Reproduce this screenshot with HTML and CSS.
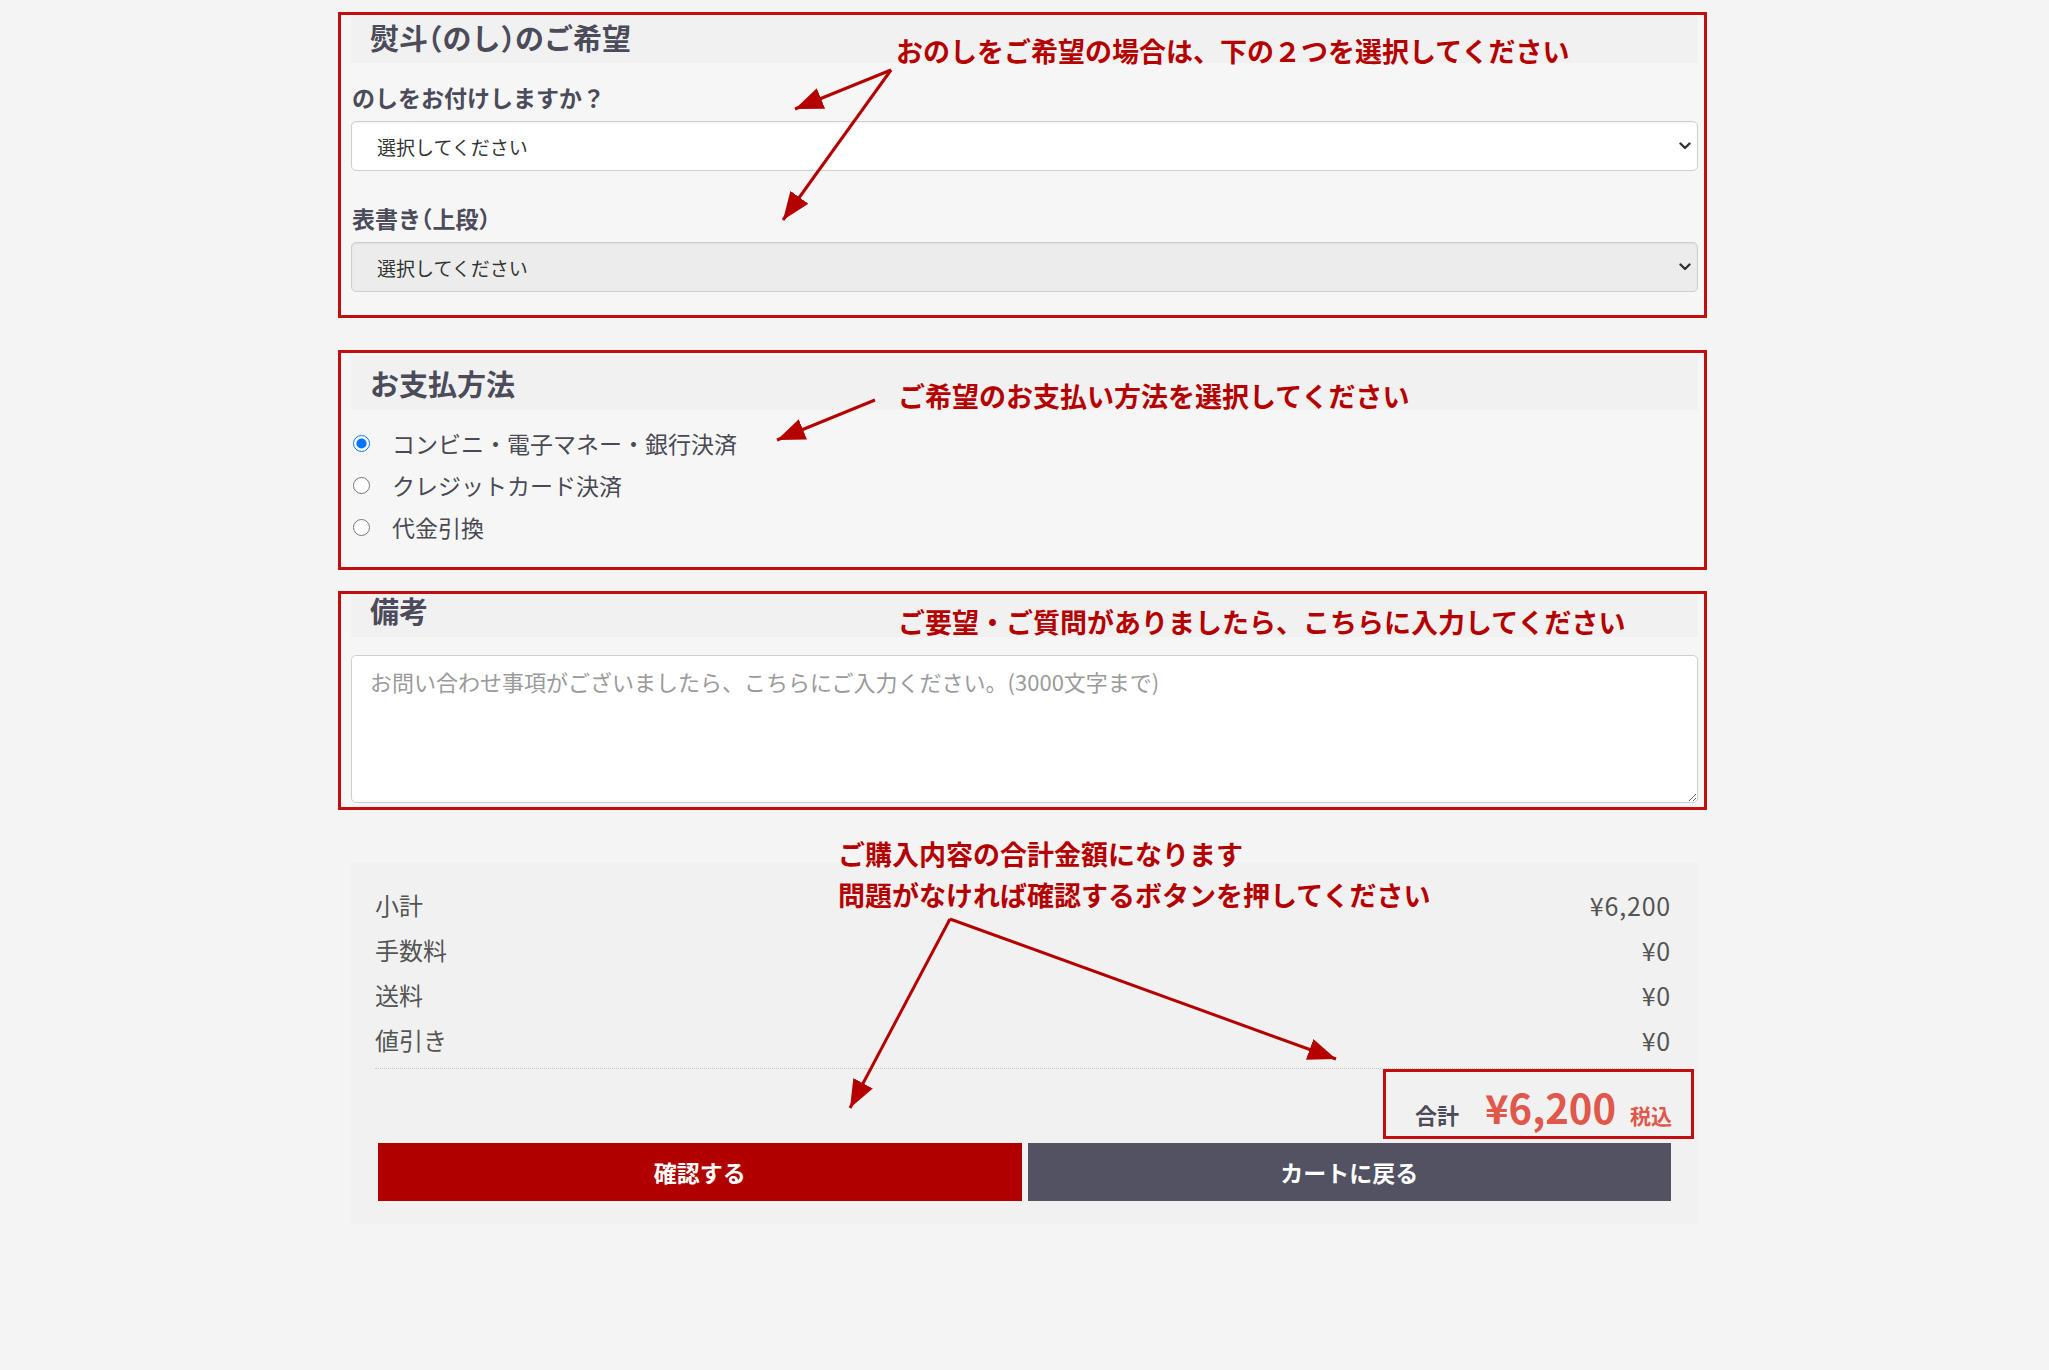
FILE: index.html
```html
<!DOCTYPE html>
<html lang="ja">
<head>
<meta charset="utf-8">
<title>ご注文手続き</title>
<link rel="stylesheet" href="styles.css">
</head>
<body>
<div class="page">
  <section class="ann-box box1">
    <div class="sec-head"><h2 class="sec-title">熨斗<span class="paren">（</span>のし<span class="paren">）</span>のご希望</h2></div>
    <label class="field-label">のしをお付けしますか？</label>
    <div class="select-wrap">
      <select class="select"><option>選択してください</option></select>
      <svg class="chev" viewBox="0 0 12 8"><path d="M1.5 1.5 L6 6 L10.5 1.5" fill="none" stroke="#333" stroke-width="2.4" stroke-linecap="round" stroke-linejoin="round"/></svg>
    </div>
    <label class="field-label second">表書き<span class="paren">（</span>上段<span class="paren">）</span></label>
    <div class="select-wrap">
      <select class="select is-grey"><option>選択してください</option></select>
      <svg class="chev" viewBox="0 0 12 8"><path d="M1.5 1.5 L6 6 L10.5 1.5" fill="none" stroke="#333" stroke-width="2.4" stroke-linecap="round" stroke-linejoin="round"/></svg>
    </div>
  </section>

  <section class="ann-box box2">
    <div class="sec-head"><h2 class="sec-title">お支払方法</h2></div>
    <div class="radio-list">
      <label class="radio-row"><input type="radio" name="pay" checked><span>コンビニ・電子マネー・銀行決済</span></label>
      <label class="radio-row"><input type="radio" name="pay"><span>クレジットカード決済</span></label>
      <label class="radio-row"><input type="radio" name="pay"><span>代金引換</span></label>
    </div>
  </section>

  <section class="ann-box box3">
    <div class="sec-head"><h2 class="sec-title">備考</h2></div>
    <textarea class="note" placeholder="お問い合わせ事項がございましたら、こちらにご入力ください。(3000文字まで)"></textarea>
  </section>

  <div class="summary">
    <div class="sum-row"><span>小計</span><span class="sum-val">¥6,200</span></div>
    <div class="sum-row"><span>手数料</span><span class="sum-val">¥0</span></div>
    <div class="sum-row"><span>送料</span><span class="sum-val">¥0</span></div>
    <div class="sum-row"><span>値引き</span><span class="sum-val">¥0</span></div>
    <div class="sum-divider"></div>
    <div class="total-box">
      <span class="total-label">合計</span>
      <span class="total-amount">¥6,200</span>
      <span class="total-tax">税込</span>
    </div>
    <div class="actions">
      <button class="btn btn-primary">確認する</button>
      <button class="btn btn-secondary">カートに戻る</button>
    </div>
  </div>
</div>

<div class="ann-text a1">おのしをご希望の場合は、下の２つを選択してください</div>
<div class="ann-text a2">ご希望のお支払い方法を選択してください</div>
<div class="ann-text a3">ご要望・ご質問がありましたら、こちらに入力してください</div>
<div class="ann-text a4">ご購入内容の合計金額になります</div>
<div class="ann-text a5">問題がなければ確認するボタンを押してください</div>

<svg class="arrows" width="2049" height="1370" viewBox="0 0 2049 1370">
  <defs>
    <marker id="ah" markerUnits="userSpaceOnUse" markerWidth="30" markerHeight="24" refX="28" refY="11" orient="auto">
      <path d="M0 0 L28 11 L0 22 Z" fill="#b50000"/>
    </marker>
  </defs>
  <g stroke="#b50000" stroke-width="3" fill="none">
    <line x1="891" y1="70" x2="795" y2="109" marker-end="url(#ah)"/>
    <line x1="891" y1="70" x2="783" y2="220" marker-end="url(#ah)"/>
    <line x1="875" y1="400" x2="777" y2="440" marker-end="url(#ah)"/>
    <line x1="950" y1="919" x2="850" y2="1108" marker-end="url(#ah)"/>
    <line x1="950" y1="919" x2="1336" y2="1059" marker-end="url(#ah)"/>
  </g>
</svg>
</body>
</html>
```

FILE: styles.css
```css
* { box-sizing: border-box; }

body {
  margin: 0;
  position: relative;
  background: #f4f4f4;
  font-family: "Noto Sans CJK JP", "Noto Sans", sans-serif;
  color: #444;
}

.page {
  width: 1347px;
  margin: 0 auto;
  padding-top: 12px;
  padding-bottom: 40px;
}

/* red annotation frames around sections */
.ann-box {
  border: 3px solid #c10e0e;
  margin: 0 -9px 0 -13px;
  padding: 0 6px 0 10px;
  background: #f6f6f6;
}
.box1 { padding-bottom: 23px; }
.box2 { margin-top: 32px; padding-top: 3px; padding-bottom: 19px; }
.box3 { margin-top: 21px; padding-bottom: 4px; }

.sec-head {
  background: #f1f1f1;
  padding-left: 19px;
}
.sec-title {
  margin: 0;
  font-size: 29px;
  font-weight: 700;
  line-height: 36px;
  color: #4b4b5a;
}
.paren { font-feature-settings: "halt"; }
.box1 .sec-head { padding-top: 4px; padding-bottom: 8px; }
.box2 .sec-head { padding-top: 9px; padding-bottom: 9px; }
.box3 .sec-head { padding-top: 1px; padding-bottom: 12px; }
.box3 .sec-title { line-height: 30px; }

.field-label {
  display: block;
  font-size: 23px;
  font-weight: 700;
  line-height: 32px;
  color: #4b4b5a;
  margin: 18px 0 8px 1px;
}
.field-label.second { margin-top: 31px; }

.select-wrap { position: relative; }
.select {
  appearance: none;
  -webkit-appearance: none;
  display: block;
  width: 100%;
  height: 50px;
  border: 1px solid #cfcfcf;
  border-radius: 5px;
  background: #fff;
  font-family: "Noto Sans CJK JP", sans-serif;
  font-size: 19px;
  color: #333;
  padding: 0 40px 0 25px;
  box-shadow: inset 0 1px 2px rgba(0,0,0,0.06);
}
.select.is-grey { background: #ececec; }
.chev {
  position: absolute;
  right: 7px;
  top: 50%;
  width: 12px;
  height: 8px;
  margin-top: -4px;
  pointer-events: none;
}

.radio-list { margin-top: 12px; }
.radio-row {
  display: flex;
  align-items: center;
  gap: 22px;
  height: 42px;
  padding-left: 2px;
  font-size: 23px;
  color: #4a4a55;
}
.radio-row input {
  width: 17px;
  height: 17px;
  margin: 0;
}

.note {
  display: block;
  width: 100%;
  height: 148px;
  margin-top: 18px;
  border: 1px solid #cfcfcf;
  border-radius: 5px;
  background: #fff;
  padding: 12px 18px;
  font-family: "Noto Sans CJK JP", sans-serif;
  font-size: 22px;
  line-height: 26px;
  color: #333;
  resize: vertical;
}
.note::placeholder { color: #9a9a9a; }

.summary {
  margin-top: 53px;
  background: #f1f1f1;
  padding: 19px 27px 23px 24px;
}
.sum-row {
  display: flex;
  justify-content: space-between;
  align-items: center;
  height: 45px;
  font-size: 24px;
  color: #555;
}
.sum-val {
  font-size: 25px;
  letter-spacing: 0.8px;
}
.sum-divider {
  margin-top: 6px;
  border-top: 1px dotted #c6c6c6;
}
.total-box {
  width: 311px;
  height: 70px;
  margin-left: auto;
  margin-right: -23px;
  border: 3px solid #c10e0e;
  display: flex;
  justify-content: flex-end;
  align-items: baseline;
  padding: 15px 19px 0 0;
}
.total-label {
  font-size: 22px;
  font-weight: 700;
  color: #4b4b5a;
  margin-right: 26px;
}
.total-amount {
  font-size: 40px;
  font-weight: 700;
  line-height: 1;
  color: #e0574b;
  margin-right: 14px;
}
.total-tax {
  font-size: 21px;
  font-weight: 700;
  color: #e0574b;
}

.actions {
  display: flex;
  gap: 6px;
  margin-top: 4px;
  margin-left: 3px;
}
.btn {
  flex: 1;
  height: 58px;
  border: none;
  color: #fff;
  font-family: "Noto Sans CJK JP", sans-serif;
  font-size: 23px;
  font-weight: 700;
}
.btn-primary { background: #b00000; }
.btn-secondary { background: #525263; }

/* red annotation texts and arrows layered over the form */
.ann-text {
  position: absolute;
  font-family: "Noto Sans CJK JP", sans-serif;
  font-size: 27px;
  font-weight: 700;
  line-height: 1;
  color: #b50000;
  white-space: nowrap;
}
.a1 { left: 896px; top: 37px; }
.a2 { left: 898px; top: 382px; }
.a3 { left: 898px; top: 608px; }
.a4 { left: 838px; top: 840px; }
.a5 { left: 838px; top: 881px; }

.arrows {
  position: absolute;
  left: 0;
  top: 0;
  pointer-events: none;
}
```
